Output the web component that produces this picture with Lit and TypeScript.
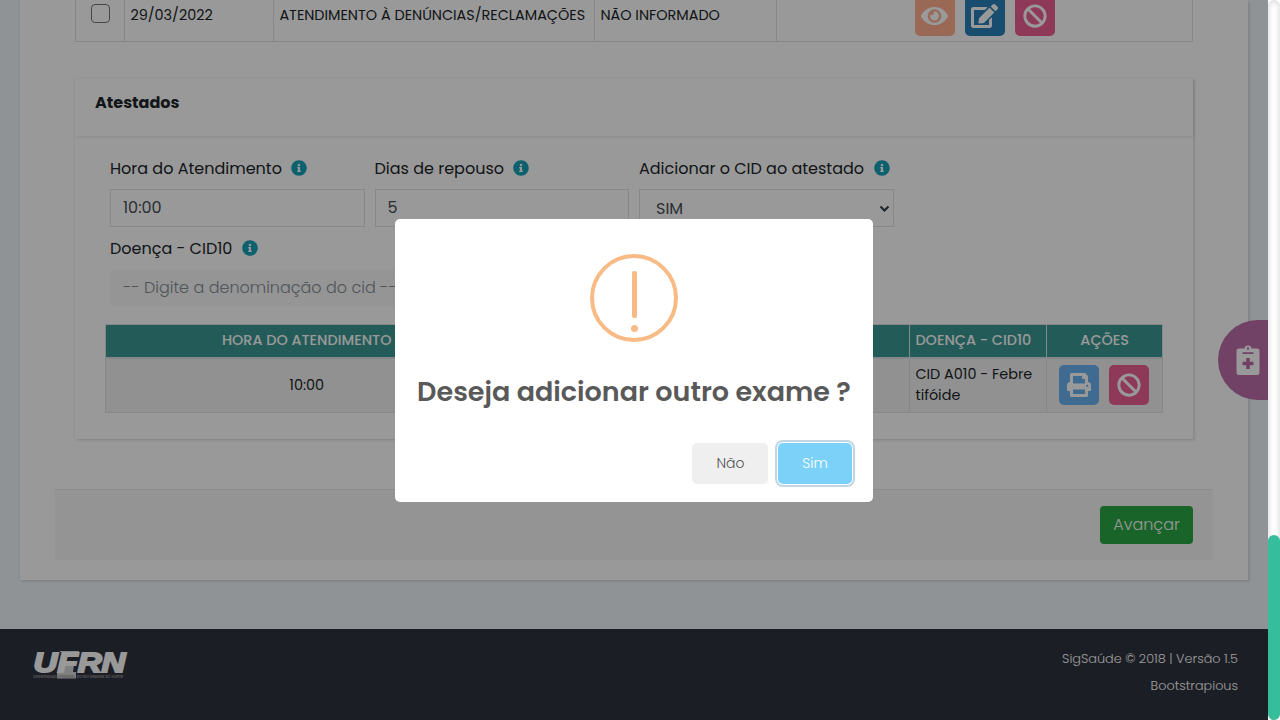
import { LitElement, html, css, svg } from "lit";
import { customElement } from "lit/decorators.js";

const ICONS: Record<string, { box: string; d: string }> = {
  info: {
    box: "0 0 512 512",
    d: "M256 8C119.043 8 8 119.083 8 256c0 136.997 111.043 248 248 248s248-111.003 248-248C504 119.083 392.957 8 256 8zm0 110c23.196 0 42 18.804 42 42s-18.804 42-42 42-42-18.804-42-42 18.804-42 42-42zm56 254c0 6.627-5.373 12-12 12h-88c-6.627 0-12-5.373-12-12v-24c0-6.627 5.373-12 12-12h12v-64h-12c-6.627 0-12-5.373-12-12v-24c0-6.627 5.373-12 12-12h64c6.627 0 12 5.373 12 12v100h12c6.627 0 12 5.373 12 12v24z",
  },
  eye: {
    box: "0 0 576 512",
    d: "M572.52 241.4C518.29 135.59 410.93 64 288 64S57.68 135.64 3.48 241.41a32.35 32.35 0 0 0 0 29.19C57.71 376.41 165.07 448 288 448s230.32-71.64 284.52-177.41a32.35 32.35 0 0 0 0-29.19zM288 400a144 144 0 1 1 144-144 143.93 143.93 0 0 1-144 144zm0-240a95.31 95.31 0 0 0-25.31 3.79 47.85 47.85 0 0 1-66.9 66.9A95.78 95.78 0 1 0 288 160z",
  },
  edit: {
    box: "0 0 576 512",
    d: "M402.6 83.2l90.2 90.2c3.8 3.8 3.8 10 0 13.8L274.4 405.6l-92.8 10.3c-12.4 1.4-22.9-9.1-21.5-21.5l10.3-92.8L388.8 83.2c3.8-3.8 10-3.8 13.8 0zm162-22.9l-48.8-48.8c-15.2-15.2-39.9-15.2-55.2 0l-35.4 35.4c-3.8 3.8-3.8 10 0 13.8l90.2 90.2c3.8 3.8 10 3.8 13.8 0l35.4-35.4c15.2-15.3 15.2-40 0-55.2zM384 346.2V448H64V128h229.8c3.2 0 6.2-1.3 8.5-3.5l40-40c7.6-7.6 2.2-20.5-8.5-20.5H48C21.5 64 0 85.5 0 112v352c0 26.5 21.5 48 48 48h352c26.5 0 48-21.5 48-48V306.2c0-10.7-12.9-16-20.5-8.5l-40 40c-2.2 2.3-3.5 5.3-3.5 8.5z",
  },
  ban: {
    box: "0 0 512 512",
    d: "M256 8C119.034 8 8 119.033 8 256s111.034 248 248 248 248-111.034 248-248S392.967 8 256 8zm130.108 117.892c65.448 65.448 70 165.481 20.677 235.637L150.47 105.216c70.204-49.356 170.226-44.735 235.638 20.676zM125.892 386.108c-65.448-65.448-70-165.481-20.677-235.637L361.53 406.784c-70.203 49.356-170.226 44.736-235.638-20.676z",
  },
  print: {
    box: "0 0 512 512",
    d: "M448 192V77.25c0-8.49-3.37-16.62-9.37-22.63L393.37 9.37c-6-6-14.14-9.37-22.63-9.37H96C78.33 0 64 14.33 64 32v160c-35.35 0-64 28.65-64 64v112c0 8.84 7.16 16 16 16h48v96c0 17.67 14.33 32 32 32h320c17.67 0 32-14.33 32-32v-96h48c8.84 0 16-7.16 16-16V256c0-35.35-28.65-64-64-64zm-64 256H128v-96h256v96zm0-224H128V64h192v48c0 8.84 7.16 16 16 16h48v96zm48 72c-13.25 0-24-10.75-24-24 0-13.26 10.75-24 24-24s24 10.74 24 24c0 13.25-10.75 24-24 24z",
  },
};

const icon = (name: string) => html`
  <svg class="icon ${name}" viewBox=${ICONS[name].box} aria-hidden="true">
    ${svg`<path fill="currentColor" d=${ICONS[name].d}></path>`}
  </svg>`;

@customElement("app-root")
export class AppRoot extends LitElement {
  static styles = css`
    :host { display: block; width: 1280px; height: 720px; overflow: hidden; position: relative;
      font: 400 16px/24px Poppins, "Open Sans", sans-serif; color: #212529; }
    * { box-sizing: border-box; }
    .shell { display: flex; height: 720px; }
    .page { width: 1268px; height: 720px; background: #eef5f9; display: flex; flex-direction: column; }
    .panel { margin: 0 20px; height: 580px; flex: none; background: #fff; padding: 0 35px 20px;
      display: flex; flex-direction: column;
      box-shadow: 2px 2px 2px rgba(0,0,0,.1), -1px 0 2px rgba(0,0,0,.05); }
    .icon { display: block; flex: none; }

    .exams { margin: 0 20px; height: 42px; display: grid; flex: none;
      grid-template-columns: 48px 149px 321px 182px 1fr; width: 1118px;
      border: 1px solid #dee2e6; border-top: 0; font-size: 14.4px; line-height: 21.6px; }
    .exams > div { padding: 5px 5px 0 5.4px; border-left: 1px solid #dee2e6; white-space: nowrap; }
    .exams > div:first-child { border-left: 0; padding: 4px 0 0 15px; }
    .exams .acts { display: flex; gap: 10px; padding: 0 0 0 138px; margin-top: -4px; }
    .check { width: 19px; height: 19px; border: 1.5px solid #767676; border-radius: 4px; background: #fff; }
    .sq { width: 40px; height: 40px; border-radius: 5px; display: flex; align-items: center;
      justify-content: center; color: #fff; flex: none; }
    .sq .icon { height: 24px; }
    .sq .eye, .sq .edit { width: 27px; margin-right: 1px; }
    .sq.view { background: #ffaf8f; }
    .sq.change { background: #2980b9; }
    .sq.deny { background: #ee6093; }
    .sq.prn { background: #69b3f0; }

    .card { margin: 36px 20px 0; width: 1118px; height: 361px; flex: none; background: #fff;
      box-shadow: 2px 2px 2px rgba(0,0,0,.1), -1px 0 2px rgba(0,0,0,.05); }
    .card-head { height: 58px; padding: 13px 20px; font-weight: 700;
      box-shadow: 0 2px 2px rgba(0,0,0,.05), 2px 0 2px rgba(0,0,0,.05); }
    .card-body { padding: 20px 30px 0; }
    .fields { display: grid; grid-template-columns: repeat(4, 1fr); column-gap: 10px; padding: 0 5px; }
    .field { height: 80px; white-space: nowrap; }
    .wide { grid-column: span 2; height: 88px; }
    .label { display: flex; align-items: center; gap: 9.5px; height: 24px; margin-bottom: 9px; }
    .label span { margin-top: 2px; }
    .label .icon { width: 16px; height: 16px; color: #17a2b8; }
    .input { height: 38px; border: 1px solid #dee2e6; padding: 6px 12px 4px; color: #495057; background: #fff; }
    .select { display: flex; justify-content: space-between; padding: 7px 3px 3px 16px; }
    .select svg { width: 11px; height: 11px; margin-top: 6px; }
    .auto { border: 0; border-radius: 4px; background: #f8f8f8; color: #868e96; font-weight: 300; padding: 7px 13px 0; }

    .grid { display: grid; width: 1058px; grid-template-columns: 401px 402px 137px 1fr;
      grid-template-rows: 34px 53px; border: 1px solid #dee2e6;
      font-size: 14.4px; line-height: 21px; height: 89px; }
    .grid > div { border-left: 1px solid #dee2e6; padding: 5px 5px 0 5.4px; }
    .grid > div:nth-child(4n + 1) { border-left: 0; }
    .grid .th { background: #3b9894; color: #fff; font-weight: 500; border-bottom: 2px solid #dee2e6; }
    .grid .td { background: #f2f2f2; }
    .c { text-align: center; }
    .grid .mid { padding-top: 16px; }
    .grid .acts { display: flex; gap: 10px; padding: 6px 0 0 12px; }

    .bar { margin-top: 50px; height: 71px; width: 1158px; border-top: 1px solid #e8e8e8; background: #f7f7f7;
      display: flex; justify-content: flex-end; padding: 16px 20px 0 0; }
    .next { width: 93px; height: 38px; border-radius: 4px; background: #28a745; color: #fff;
      font-weight: 300; text-align: center; padding: 7px 0 0; }

    .foot { margin-top: 49px; height: 91px; background: #2f333e; display: flex; justify-content: space-between;
      padding: 16px 30px 0 32px; color: #fff; font-size: 12.8px; line-height: 27px; font-weight: 300; text-align: right; }
    .foot .logo { width: 96px; height: 34px; margin-top: 5px; overflow: visible; }

    .track { width: 12px; height: 720px; background: #fff; border-radius: 6px; display: flex; align-items: flex-end;
      box-shadow: inset 0 0 6px rgba(0,0,0,.2); }
    .thumb { width: 12px; height: 185px; border-radius: 6px; background: #36bd9b; }

    .fab { position: absolute; left: 1218px; top: 320px; width: 50px; height: 80px; border-radius: 40px 0 0 40px;
      background: #bc6ea8; display: flex; align-items: center; padding-left: 18px; }
    .fab svg { width: 24px; height: 30px; }
    .shade { position: absolute; left: 0; top: 0; width: 1268px; height: 720px; background: rgba(0,0,0,.4); }
    .modal { position: absolute; left: 395px; top: 219px; width: 478px; height: 283px; border-radius: 5px;
      background: #fff; display: flex; flex-direction: column; align-items: center; padding-top: 35px; }
    .warn { width: 88px; height: 88px; border: 4px solid #f8bb86; border-radius: 50%; display: flex;
      flex-direction: column; align-items: center; padding: 13px 0 0 1px; }
    .warn i { display: block; width: 5px; height: 47px; border-radius: 2px; background: #f8bb86; }
    .warn b { display: block; width: 7px; height: 7px; margin-top: 7px; border-radius: 50%; background: #f8bb86; }
    .title { margin-top: 30px; height: 40px; font-size: 27px; line-height: 40px; font-weight: 600; color: #595959; white-space: nowrap; }
    .btns { align-self: stretch; display: flex; justify-content: flex-end; gap: 10px; margin-top: 31px; padding-right: 21px; }
    .btn { height: 41px; border-radius: 5px; font-size: 14px; line-height: 41px; text-align: center; font-weight: 300; }
    .no { width: 76px; background: #efefef; color: #555; padding-left: 1px; }
    .yes { width: 74px; background: #7cd1f9; color: #fff; box-shadow: 0 0 0 1px #fff, 0 0 0 3px rgba(43,114,165,.29); }
  `;

  private label(text: string) {
    return html`<div class="label"><span>${text}</span>${icon("info")}</div>`;
  }

  render() {
    return html`
      <div class="shell">
        <div class="page">
          <div class="panel">
            <div class="exams">
              <div><div class="check"></div></div>
              <div>29/03/2022</div>
              <div>ATENDIMENTO À DENÚNCIAS/RECLAMAÇÕES</div>
              <div>NÃO INFORMADO</div>
              <div class="acts">
                <span class="sq view">${icon("eye")}</span>
                <span class="sq change">${icon("edit")}</span>
                <span class="sq deny">${icon("ban")}</span>
              </div>
            </div>
            <div class="card">
              <div class="card-head">Atestados</div>
              <div class="card-body">
                <div class="fields">
                  <div class="field">${this.label("Hora do Atendimento")}<div class="input">10:00</div></div>
                  <div class="field">${this.label("Dias de repouso")}<div class="input">5</div></div>
                  <div class="field">${this.label("Adicionar o CID ao atestado")}
                    <div class="input select">SIM<svg viewBox="0 0 11 11"><path d="M1.500 3.500l4 4 4-4" fill="none" stroke="#343a40" stroke-width="2"/></svg></div>
                  </div>
                  <div></div>
                  <div class="field wide">${this.label("Doença - CID10")}<div class="input auto">-- Digite a denominação do cid --</div></div>
                </div>
                <div class="grid">
                  <div class="th c">HORA DO ATENDIMENTO</div>
                  <div class="th"></div>
                  <div class="th">DOENÇA - CID10</div>
                  <div class="th c">AÇÕES</div>
                  <div class="td c mid">10:00</div>
                  <div class="td"></div>
                  <div class="td">CID A010 - Febre tifóide</div>
                  <div class="td acts"><span class="sq prn">${icon("print")}</span><span class="sq deny">${icon("ban")}</span></div>
                </div>
              </div>
            </div>
            <div class="bar"><div class="next">Avançar</div></div>
          </div>
          <div class="foot">
            <svg class="logo" viewBox="0 0 96 34" font-family="Liberation Sans, sans-serif" font-weight="700" font-style="italic">
              <path d="M28 1.500H47" stroke="#ddd" stroke-width="1" fill="none"/>
              <path d="M31 15H42L41 22H44V28.500H25V22H29.500Z" fill="#fff" opacity=".8"/>
              <text x="1.500" y="22" font-size="27" textLength="92" lengthAdjust="spacingAndGlyphs" fill="#fff" stroke="#fff" stroke-width="1.800">UFRN</text>
              <text x="1" y="27.500" font-size="4" textLength="90" lengthAdjust="spacingAndGlyphs" fill="#999">UNIVERSIDADE FEDERAL DO RIO GRANDE DO NORTE</text>
            </svg>
            <div><div>SigSaúde © 2018 | Versão 1.5</div><div>Bootstrapious</div></div>
          </div>
        </div>
        <div class="track"><div class="thumb"></div></div>
      </div>
      <div class="fab">
        <svg viewBox="0 0 24 30"><path fill="#fff" fill-rule="evenodd" d="M3 3.500H8.300A3.800 3.800 0 0 1 15.700 3.500H21A2.500 2.500 0 0 1 23.500 6V27.500A2.500 2.500 0 0 1 21 30H3A2.500 2.500 0 0 1 .5 27.500V6A2.500 2.500 0 0 1 3 3.500ZM12 2.300A1.200 1.200 0 1 0 12 4.700A1.200 1.200 0 1 0 12 2.300ZM6.500 7.300V9H17.500V7.300ZM10.200 13V16.700H6.500V20.300H10.200V24H13.800V20.300H17.500V16.700H13.800V13Z"/></svg>
      </div>
      <div class="shade"></div>
      <div class="modal">
        <div class="warn"><i></i><b></b></div>
        <div class="title">Deseja adicionar outro exame ?</div>
        <div class="btns"><div class="btn no">Não</div><div class="btn yes">Sim</div></div>
      </div>
    `;
  }
}
